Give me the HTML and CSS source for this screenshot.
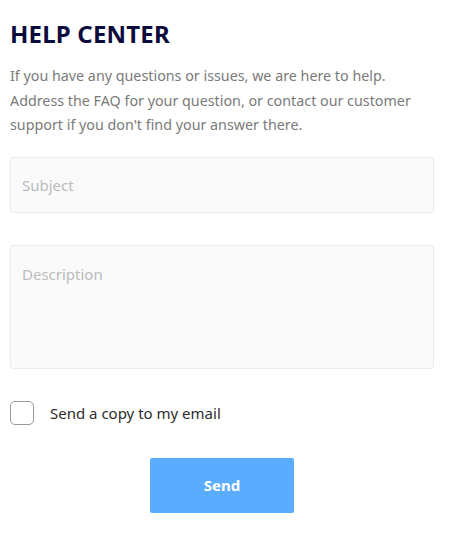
FILE: index.html
```html
<!DOCTYPE html>
<html lang="en">
<head>
<meta charset="utf-8">
<title>Help Center</title>
<link rel="stylesheet" href="styles.css">
</head>
<body>
<main class="help">
  <h1 class="help-title">HELP CENTER</h1>
  <p class="help-intro">If you have any questions or issues, we are here to help. Address the FAQ for your question, or contact our customer support if you don't find your answer there.</p>
  <form class="help-form">
    <input class="field field-subject" type="text" placeholder="Subject">
    <textarea class="field field-desc" placeholder="Description"></textarea>
    <label class="copy">
      <span class="box"></span>
      <span class="copy-text">Send a copy to my email</span>
    </label>
    <div class="actions">
      <button class="send" type="button">Send</button>
    </div>
  </form>
</main>
</body>
</html>
```
FILE: styles.css
```css
* { box-sizing: border-box; }
body {
  margin: 0;
  background: #fff;
  font-family: "Noto Sans", "Open Sans", sans-serif;
}
.help {
  width: 424px;
  margin-left: 10px;
  padding-top: 18px;
}
.help-title {
  margin: 0;
  font-size: 24px;
  line-height: 32px;
  font-weight: 700;
  color: #0d0b3d;
  letter-spacing: 0.2px;
}
.help-intro {
  margin: 14px 0 0;
  font-size: 14.3px;
  line-height: 24.5px;
  color: #7a7a7a;
}
.help-form {
  display: flex;
  flex-direction: column;
  margin-top: 19px;
}
.field {
  display: block;
  width: 100%;
  border: 1px solid #ececec;
  border-radius: 3px;
  background: #fafafa;
  font-family: inherit;
  font-size: 15px;
  color: #333;
  padding: 0 11px;
  outline: none;
}
.field::placeholder { color: #bbb; }
.field-subject { height: 56px; }
.field-desc {
  margin-top: 32px;
  height: 124px;
  padding-top: 18px;
  resize: none;
}
.copy {
  display: flex;
  align-items: center;
  gap: 16px;
  margin-top: 32px;
  cursor: pointer;
}
.box {
  width: 24px;
  height: 24px;
  border: 1.5px solid #9a9a9a;
  border-radius: 5px;
  background: #fff;
  flex: none;
}
.copy-text {
  font-size: 15px;
  color: #2d2d2d;
}
.actions {
  display: flex;
  justify-content: center;
  margin-top: 33px;
}
.send {
  width: 144px;
  height: 55px;
  border: 0;
  border-radius: 2px;
  background: #5aacff;
  color: #fff;
  font-family: inherit;
  font-weight: 700;
  font-size: 15px;
}
```
